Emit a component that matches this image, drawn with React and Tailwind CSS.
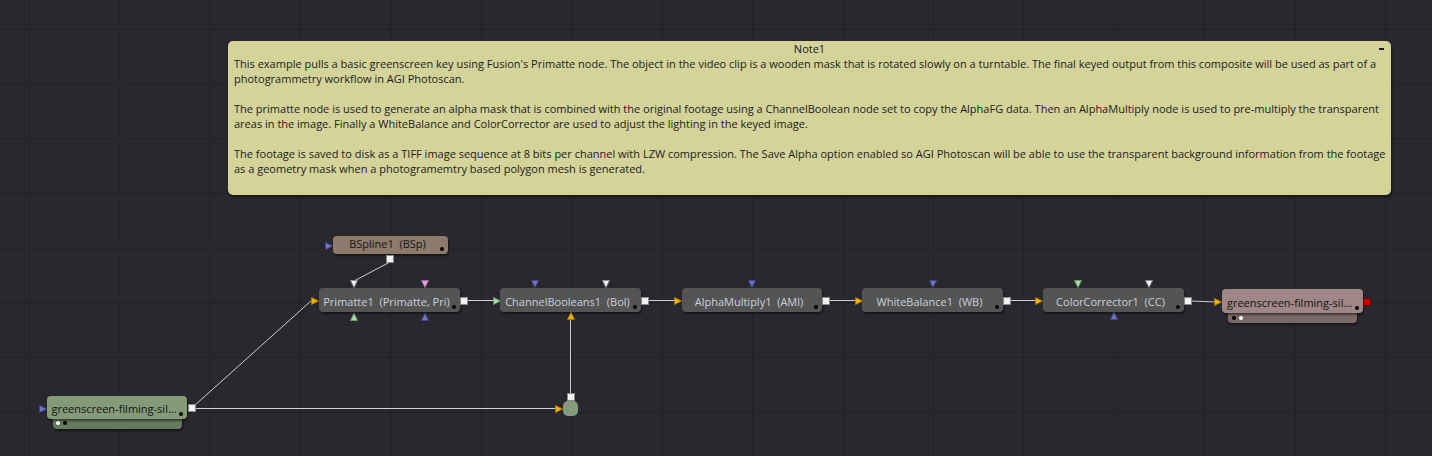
import React from "react";

const font = { fontFamily: '"Open Sans", "Noto Sans", sans-serif' };

const triColors = {
  white: ["#f2f2f2", "#8a8a8a"],
  pink: ["#e3a3e3", "#9a6a9a"],
  blue: ["#7474c6", "#46468a"],
  green: ["#a4daa4", "#6a9a6a"],
  yellow: ["#f4b100", "#a87400"],
};

const triPoints = {
  down: "0.5,0.5 7.5,0.5 4,7.5",
  up: "4,0.5 7.5,7.5 0.5,7.5",
  right: "0.5,0.5 7.5,4 0.5,7.5",
};

function Tri({ x, y, dir, color }) {
  const [fill, stroke] = triColors[color];
  return (
    <svg className="absolute" style={{ left: x, top: y }} width="8" height="8" viewBox="0 0 8 8">
      <polygon points={triPoints[dir]} fill={fill} stroke={stroke} strokeWidth="1" />
    </svg>
  );
}

function Port({ x, y, red }) {
  return (
    <div
      className={
        red
          ? "absolute h-[8px] w-[8px] border border-[#6a0000] bg-[#c80000]"
          : "absolute h-[8px] w-[8px] border border-[#8a8a8a] bg-[#f2f2f2]"
      }
      style={{ left: x, top: y }}
    />
  );
}

function Node({ x, y, w, h, label, tone = "gray" }) {
  const tones = {
    gray: "bg-[#545454] text-[#c8d1dc]",
    brown: "bg-[#8e7a6b] text-[#141414]",
    green: "bg-[#859a78] text-[#141414]",
    pink: "bg-[#a08686] text-[#141414]",
  };
  return (
    <div
      className={`absolute flex items-end justify-center rounded-[4px] pb-[3px] pr-[6px] text-[11px] leading-[15px] whitespace-pre shadow-[1px_2px_2px_rgba(0,0,0,0.45)] ${tones[tone]}`}
      style={{ left: x, top: y, width: w, height: h }}
    >
      {label}
      <div className="absolute right-[4px] bottom-[3px] h-[4px] w-[4px] rounded-full bg-black" />
    </div>
  );
}

const noteLines = [
  "This example pulls a basic greenscreen key using Fusion's Primatte node. The object in the video clip is a wooden mask that is rotated slowly on a turntable. The final keyed output from this composite will be used as part of a",
  "photogrammetry workflow in AGI Photoscan.",
  "",
  "The primatte node is used to generate an alpha mask that is combined with the original footage using a ChannelBoolean node set to copy the AlphaFG data. Then an AlphaMultiply node is used to pre-multiply the transparent",
  "areas in the image. Finally a WhiteBalance and ColorCorrector are used to adjust the lighting in the keyed image.",
  "",
  "The footage is saved to disk as a TIFF image sequence at 8 bits per channel with LZW compression. The Save Alpha option enabled so AGI Photoscan will be able to use the transparent background information from the footage",
  "as a geometry mask when a photogramemtry based polygon mesh is generated.",
];

export default function App() {
  return (
    <div
      className="relative h-[456px] w-[1432px] overflow-hidden bg-[#29282e] bg-[linear-gradient(to_right,#212026_1px,transparent_1px),linear-gradient(to_bottom,#212026_1px,transparent_1px)] bg-size-[90.4px_54.7px] bg-position-[29px_29px]"
      style={font}
    >
      {/* note */}
      <div className="absolute top-[41px] left-[228px] flex h-[154px] w-[1163px] flex-col rounded-[5px] bg-[#d3d39a] px-[6px] text-[11px] leading-[15px] text-[#1c1c1c] shadow-[1px_2px_3px_rgba(0,0,0,0.5)]">
        <div className="relative text-center">
          Note1
          <div className="absolute top-[7px] right-[1px] h-[1.5px] w-[5px] bg-[#1c1c1c]" />
        </div>
        {noteLines.map((line, i) => (
          <div key={i} className="h-[15px] whitespace-nowrap">
            {line}
          </div>
        ))}
      </div>

      {/* wires */}
      <svg className="absolute inset-0" width="1432" height="456">
        <g stroke="#cfcfcf" strokeWidth="1" fill="none">
          <line x1="390" y1="262" x2="354" y2="281" />
          <line x1="194" y1="406" x2="312" y2="300" />
          <line x1="196" y1="408.5" x2="556" y2="408.5" />
          <line x1="570.5" y1="394" x2="570.5" y2="318" />
          <line x1="467" y1="300.5" x2="494" y2="300.5" />
          <line x1="648" y1="300.5" x2="674" y2="300.5" />
          <line x1="829" y1="300.5" x2="855" y2="300.5" />
          <line x1="1010" y1="300.5" x2="1036" y2="300.5" />
          <line x1="1191" y1="301" x2="1215" y2="302" />
        </g>
      </svg>

      {/* BSpline */}
      <Tri x={325} y={242} dir="right" color="blue" />
      <Node x={333} y={236} w={115} h={18} label="BSpline1  (BSp)" tone="brown" />
      <Port x={386} y={255} />

      {/* Primatte */}
      <Tri x={350} y={280} dir="down" color="white" />
      <Tri x={421} y={280} dir="down" color="pink" />
      <Tri x={311} y={297} dir="right" color="yellow" />
      <Node x={319} y={288} w={141} h={24} label="Primatte1  (Primatte, Pri)" />
      <Tri x={350} y={313} dir="up" color="green" />
      <Tri x={421} y={313} dir="up" color="blue" />
      <Port x={460} y={297} />

      {/* ChannelBooleans */}
      <Tri x={493} y={297} dir="right" color="green" />
      <Tri x={531} y={280} dir="down" color="blue" />
      <Tri x={602} y={280} dir="down" color="white" />
      <Node x={500} y={288} w={141} h={24} label="ChannelBooleans1  (Bol)" />
      <Tri x={567} y={312} dir="up" color="yellow" />
      <Port x={641} y={297} />

      {/* AlphaMultiply */}
      <Tri x={674} y={297} dir="right" color="yellow" />
      <Tri x={748} y={280} dir="down" color="blue" />
      <Node x={682} y={288} w={140} h={24} label="AlphaMultiply1  (AMl)" />
      <Port x={822} y={297} />

      {/* WhiteBalance */}
      <Tri x={855} y={297} dir="right" color="yellow" />
      <Tri x={929} y={280} dir="down" color="blue" />
      <Node x={862} y={288} w={141} h={24} label="WhiteBalance1  (WB)" />
      <Port x={1003} y={297} />

      {/* ColorCorrector */}
      <Tri x={1035} y={297} dir="right" color="yellow" />
      <Tri x={1074} y={280} dir="down" color="green" />
      <Tri x={1145} y={280} dir="down" color="white" />
      <Node x={1043} y={288} w={141} h={24} label="ColorCorrector1  (CC)" />
      <Tri x={1110} y={312} dir="up" color="blue" />
      <Port x={1184} y={297} />

      {/* Saver */}
      <div className="absolute top-[306px] left-[1228px] h-[17px] w-[129px] rounded-[4px] bg-[#7b6868] shadow-[1px_2px_2px_rgba(0,0,0,0.45)]">
        <div className="absolute top-[10px] left-[4px] h-[4px] w-[4px] rounded-full bg-black" />
        <div className="absolute top-[10px] left-[11px] h-[4px] w-[4px] rounded-full bg-white" />
      </div>
      <Tri x={1214} y={298} dir="right" color="yellow" />
      <Node x={1222} y={289} w={141} h={24} label="greenscreen-filming-sil..." tone="pink" />
      <Port x={1363} y={298} red />

      {/* Loader */}
      <div className="absolute top-[412px] left-[53px] h-[17px] w-[129px] rounded-[4px] bg-[#687a5e] shadow-[1px_2px_2px_rgba(0,0,0,0.45)]">
        <div className="absolute top-[9px] left-[3px] h-[4px] w-[4px] rounded-full bg-white" />
        <div className="absolute top-[9px] left-[10px] h-[4px] w-[4px] rounded-full bg-black" />
      </div>
      <Tri x={39} y={405} dir="right" color="blue" />
      <Node x={47} y={396} w={140} h={23} label="greenscreen-filming-sil..." tone="green" />
      <Port x={188} y={404} />

      {/* Dot / merge */}
      <Tri x={555} y={405} dir="right" color="yellow" />
      <div className="absolute top-[401px] left-[563px] h-[15px] w-[15px] rounded-[5px] bg-[#859b7e]" />
      <Port x={567} y={393} />
    </div>
  );
}
